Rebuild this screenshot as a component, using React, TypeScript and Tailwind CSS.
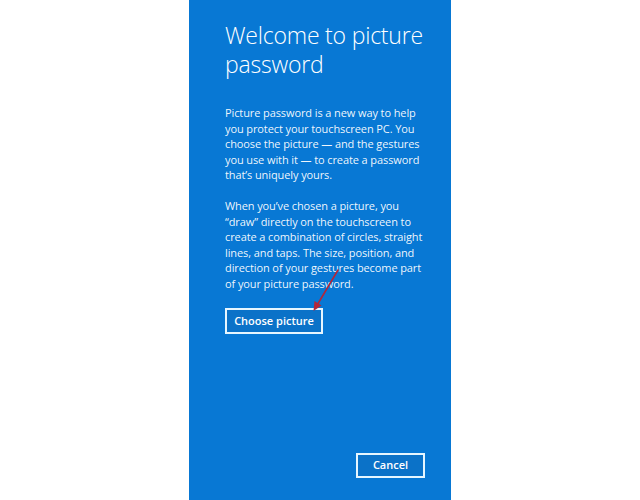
import React from 'react';

const font = { fontFamily: '"Open Sans", "Noto Sans", sans-serif' };

// red annotation arrow drawn over the panel
const Arrow: React.FC = () => (
  <svg
    className="absolute left-[120px] top-[267px] pointer-events-none"
    width="34"
    height="48"
    viewBox="0 0 34 48"
  >
    <line x1="29" y1="3" x2="7" y2="40" stroke="#b3263a" strokeWidth="1.6" strokeLinecap="round" />
    <path d="M4.5 44 L5.5 34 L12.5 38.5 Z" fill="#b3263a" />
  </svg>
);

const App: React.FC = () => {
  return (
    <div className="w-[640px] h-[500px] bg-white flex justify-center" style={font}>
      <div className="relative w-[262px] h-full bg-[#0878d4] flex flex-col pl-[36px] pr-[26px] pb-[22px] text-white">
        <h1 className="mt-[21px] flex flex-col text-[23px] leading-[29px] font-light tracking-[-0.2px]">
          <span>Welcome to picture</span>
          <span>password</span>
        </h1>

        <div className="mt-[26px] text-[11px] leading-[15.5px] tracking-[-0.1px] whitespace-nowrap text-white/95">
          <p>
            Picture password is a new way to help
            <br />
            you protect your touchscreen PC. You
            <br />
            choose the picture — and the gestures
            <br />
            you use with it — to create a password
            <br />
            that’s uniquely yours.
          </p>
          <p className="mt-[15.5px]">
            When you’ve chosen a picture, you
            <br />
            “draw” directly on the touchscreen to
            <br />
            create a combination of circles, straight
            <br />
            lines, and taps. The size, position, and
            <br />
            direction of your gestures become part
            <br />
            of your picture password.
          </p>
        </div>

        <div className="mt-[16px]">
          <button className="h-[26px] w-[98px] border-2 border-[#e6f6ff] bg-[#0b72c8] text-[11px] font-semibold text-white">
            Choose picture
          </button>
        </div>

        <div className="mt-auto flex justify-end">
          <button className="h-[25px] w-[69px] border-2 border-[#e6f6ff] bg-[#0b72c8] text-[11px] font-semibold text-white">
            Cancel
          </button>
        </div>

        <Arrow />
      </div>
    </div>
  );
};

export default App;
